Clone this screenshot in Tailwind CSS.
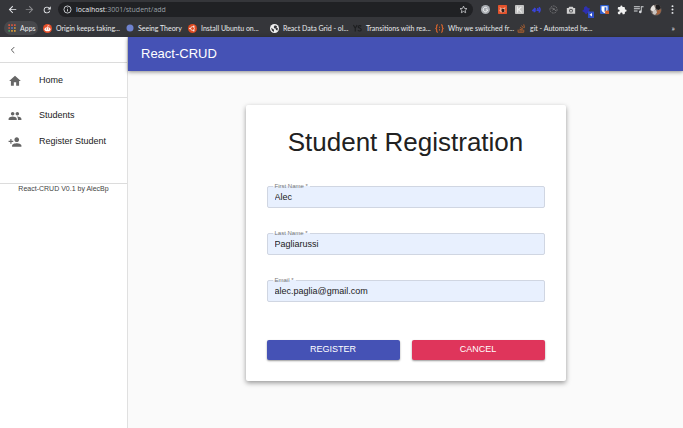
<!DOCTYPE html>
<html lang="en">
<head>
    <meta charset="UTF-8">
    <meta name="viewport" content="width=device-width, initial-scale=1.0">
    <title>React-CRUD</title>
    <script src="https://cdn.jsdelivr.net/npm/@tailwindcss/browser@4"></script>
</head>
<body class="min-h-screen flex flex-col bg-[#fafafa] font-['Liberation_Sans',Arial,sans-serif] text-[#212121]">

    <!-- Browser chrome -->
    <header class="bg-[#35363a] text-[#e8eaed] font-['Open_Sans',sans-serif] text-[7px]">
        <div class="flex items-center h-[19px] pl-1 pr-[2px]">
            <button class="w-[17px] flex justify-center" aria-label="Back">
                <svg class="w-[9px] h-[9px]" viewBox="0 0 24 24" fill="currentColor"><path d="M22 11H6.8l6.6-6.6L12 2 2 12l10 10 1.6-1.8L6.8 13.5H22z"/></svg>
            </button>
            <button class="w-[17px] flex justify-center text-[#8b8c8f]" aria-label="Forward">
                <svg class="w-[9px] h-[9px]" viewBox="0 0 24 24" fill="currentColor"><path d="M2 11h15.2l-6.6-6.6L12 2l10 10-10 10-1.6-1.8 6.8-6.7H2z"/></svg>
            </button>
            <button class="w-[17px] flex justify-center" aria-label="Reload">
                <svg class="w-[10px] h-[10px]" viewBox="0 0 24 24" fill="currentColor"><path d="M17.65 6.35A7.96 7.96 0 0 0 12 4a8 8 0 1 0 7.73 10h-2.08A6 6 0 1 1 12 6c1.66 0 3.14.69 4.22 1.78L13 11h8V3z"/></svg>
            </button>
            <div class="flex-1 flex items-center h-[15px] ml-[3px] mr-1 pl-[5px] pr-[5px] rounded-full bg-[#202124]">
                <svg class="w-[9px] h-[9px] mr-[4px]" viewBox="0 0 24 24" fill="none" stroke="#d5d7da" stroke-width="2.4"><circle cx="12" cy="12" r="9.5"/><path d="M12 11v6M12 6.5v2"/></svg>
                <p class="flex-1 pt-px text-[7px] text-[#9aa0a6]"><span class="text-[#e8eaed]">localhost</span>:3001/student/add</p>
                <svg class="w-[9px] h-[9px]" viewBox="0 0 24 24" fill="none" stroke="#d5d7da" stroke-width="2"><path d="M12 3l2.7 6.1 6.6.6-5 4.4 1.5 6.5L12 17.2l-5.8 3.4 1.5-6.5-5-4.4 6.6-.6z"/></svg>
            </div>
            <button class="w-[17px] flex justify-center" aria-label="Grammar checker">
                <svg class="w-[9px] h-[9px]" viewBox="0 0 24 24"><circle cx="12" cy="12" r="12" fill="#a9adb2"/><path d="M16.5 8.5a6 6 0 1 0 1.3 4.5H13" fill="none" stroke="#f4f5f6" stroke-width="2.6"/></svg>
            </button>
            <button class="w-[17px] flex justify-center" aria-label="Debugger">
                <svg class="w-[9px] h-[9px]" viewBox="0 0 24 24"><rect width="24" height="24" rx="2" fill="#e4532c"/><path d="M4 5l5 3h6l5-3-2 7 2 5-6 3-7-1-4-5 3-3z" fill="#f3a58c"/><path d="M10 9l7 2v7l-5 2-3-5z" fill="#2a2220"/></svg>
            </button>
            <button class="w-[17px] flex justify-center" aria-label="Formatter">
                <svg class="w-[9px] h-[9px]" viewBox="0 0 24 24"><rect width="24" height="24" rx="2" fill="#c3c3c3"/><path d="M7 4v16M7 14L17 5M10 11l8 9" stroke="#ededed" stroke-width="3" fill="none"/></svg>
            </button>
            <button class="w-[17px] flex justify-center" aria-label="Volume booster">
                <svg class="w-[9px] h-[9px]" viewBox="0 0 24 24" fill="none" stroke="#3a44d8" stroke-width="4"><path d="M1 16l5-5v8M8 8v10M12 14h5l-2-6M18 20c4-4 4-10 1-14"/></svg>
            </button>
            <button class="w-[17px] flex justify-center" aria-label="React tools">
                <svg class="w-[9px] h-[9px]" viewBox="0 0 24 24" fill="none" stroke="#77777a" stroke-width="2.4"><circle cx="12" cy="12" r="9.5" stroke-dasharray="5 2"/><path d="M6 8c5 0 10 3 12 8M9 14l6-4"/></svg>
            </button>
            <button class="w-[17px] flex justify-center" aria-label="Screenshot">
                <svg class="w-[10px] h-[10px]" viewBox="0 0 24 24" fill="#d0d0d0"><path d="M8 4h8l2 3h4v14H2V7h4z"/><circle cx="12" cy="13.5" r="4.6" fill="#4b4c50"/><circle cx="12" cy="13.5" r="2.4"/></svg>
            </button>
            <button class="w-[17px] flex justify-center" aria-label="Tab manager">
                <svg class="w-[12px] h-[12px] mt-1" viewBox="0 0 24 24"><path d="M8 0l4 4 4 1-2 4 2 4-5 1-3 3-3-4-5-3 4-3V3z" fill="#2e30b0"/><rect x="12" y="11" width="12" height="13" rx="1" fill="#3050c8"/><path d="M20 14v7l-5-3.5z" fill="#fff"/></svg>
            </button>
            <button class="w-[17px] flex justify-center" aria-label="Password manager">
                <svg class="w-[9px] h-[9px]" viewBox="0 0 24 24"><rect width="24" height="24" rx="3" fill="#2e5fd0"/><path d="M4 3h16v9c0 5-4 8-8 10-4-2-8-5-8-10z" fill="#fff"/><path d="M12 6h5v6c0 3-2 5-5 6z" fill="#2e5fd0"/><rect x="14" y="15" width="10" height="9" fill="#d2622a"/></svg>
            </button>
            <button class="w-[17px] flex justify-center" aria-label="Extensions">
                <svg class="w-[10px] h-[10px]" viewBox="0 0 24 24" fill="#f1f1f1"><path d="M20.5 11H19V7a2 2 0 0 0-2-2h-4V3.5a2.5 2.5 0 0 0-5 0V5H4a2 2 0 0 0-2 2v3.8h1.5a2.7 2.7 0 0 1 0 5.4H2V20a2 2 0 0 0 2 2h3.8v-1.5a2.7 2.7 0 0 1 5.4 0V22H17a2 2 0 0 0 2-2v-4h1.5a2.5 2.5 0 0 0 0-5z"/></svg>
            </button>
            <button class="w-[17px] flex justify-center" aria-label="Media controls">
                <svg class="w-[11px] h-[11px]" viewBox="0 0 24 24" fill="#d5d7da"><path d="M15 5H2v2.2h13zM15 9.5H2v2.2h13zM2 16.2h8V14H2zM17 5v9.2a3 3 0 1 0 2 2.8V7.200h4V5z"/></svg>
            </button>
            <button class="w-[17px] flex justify-center" aria-label="Profile">
                <svg class="w-[12px] h-[12px]" viewBox="0 0 24 24"><circle cx="12" cy="12" r="11" fill="#6c625d"/><path d="M1 12a11 11 0 0 1 7-10l3 8-4 6z" fill="#e6e2df"/><path d="M12 2h6l4 6-5 4-5-3z" fill="#1f1d1e"/><path d="M13 13l9-2-2 8-7 3z" fill="#a8633c"/><path d="M6 14l6-3 2 6-4 5-5-3z" fill="#c9c4c1"/></svg>
            </button>
            <button class="w-[17px] flex justify-center" aria-label="Menu">
                <svg class="w-[9px] h-[9px]" viewBox="0 0 24 24" fill="#e8eaed"><circle cx="12" cy="3" r="2.6"/><circle cx="12" cy="12" r="2.6"/><circle cx="12" cy="21" r="2.6"/></svg>
            </button>
        </div>

        <!-- Bookmarks -->
        <nav class="flex items-center h-[18px] pl-1 pr-2 whitespace-nowrap font-[Lato,sans-serif]">
            <a href="#" class="flex items-center gap-1 h-[14px] w-[34px] mr-[5px] pl-[4px] rounded-full bg-[#47484c]">
                <svg class="w-[8px] h-[8px] shrink-0" viewBox="0 0 24 24"><path d="M1 1h5v5H1zM9.500 1h5v5h-5z" fill="#d9573f"/><path d="M18 1h5v5h-5zM1 9.500h5v5H1z" fill="#d9573f"/><path d="M9.500 9.500h5v5h-5z" fill="#5b7fd0"/><path d="M18 9.500h5v5h-5zM9.500 18h5v5h-5zM18 18h5v5h-5z" fill="#d99a3a"/><path d="M1 18h5v5H1z" fill="#4f9d5d"/></svg>
                Apps
            </a>
            <a href="#" class="flex items-center gap-1 w-[83px]">
                <svg class="w-[9px] h-[9px] shrink-0" viewBox="0 0 24 24"><circle cx="12" cy="12" r="12" fill="#e8502a"/><ellipse cx="12" cy="14" rx="8" ry="5.5" fill="#fff"/><circle cx="9" cy="13" r="1.5" fill="#e8502a"/><circle cx="15" cy="13" r="1.5" fill="#e8502a"/><path d="M12 9l1-5 4 1" stroke="#fff" stroke-width="1.5" fill="none"/></svg>
                Origin keeps taking...
            </a>
            <a href="#" class="flex items-center gap-1 w-[62px]">
                <svg class="w-[8px] h-[8px] shrink-0" viewBox="0 0 24 24"><circle cx="12" cy="12" r="10.5" fill="#6f82cf"/></svg>
                Seeing Theory
            </a>
            <a href="#" class="flex items-center gap-1 w-[82px]">
                <svg class="w-[9px] h-[9px] shrink-0" viewBox="0 0 24 24"><circle cx="12" cy="12" r="12" fill="#de4a20"/><circle cx="12" cy="12" r="5" fill="none" stroke="#fff" stroke-width="2"/><circle cx="5" cy="12" r="2" fill="#fff"/><circle cx="15.5" cy="6" r="2" fill="#fff"/><circle cx="15.5" cy="18" r="2" fill="#fff"/></svg>
                Install Ubuntu on...
            </a>
            <a href="#" class="flex items-center gap-1 w-[83px]">
                <svg class="w-[9px] h-[9px] shrink-0" viewBox="0 0 24 24"><circle cx="12" cy="12" r="12" fill="#f1f1f1"/><path d="M13 3l6 3-2 3 4 2-1 6-4-1-1-4-4-1-1-4zM3 10l5 3 3 2-1 6-5-4z" fill="#35363a"/></svg>
                React Data Grid - ol...
            </a>
            <a href="#" class="flex items-center gap-1 w-[82px]">
                <svg class="w-[9px] h-[9px] shrink-0" viewBox="0 0 24 24" fill="none" stroke="#1d1e20" stroke-width="3"><path d="M1 3l5 8v9M11 3l-5 8M22 6c-4-3-9-1-8 2s8 3 8 7-6 5-9 2"/></svg>
                Transitions with rea...
            </a>
            <a href="#" class="flex items-center gap-1 w-[82px]">
                <svg class="w-[9px] h-[9px] shrink-0" viewBox="0 0 24 24" fill="none" stroke="#e2672c" stroke-width="2.8"><path d="M8 2C3 2 5 6 4.500 9S1 12 1 12s3 0 3.500 3S3 22 8 22M16 2c5 0 3 4 3.500 7s3.500 3 3.500 3-3 0-3.500 3 1.500 7-3.500 7M12 7v3M12 14v3"/></svg>
                Why we switched fr...
            </a>
            <a href="#" class="flex items-center gap-1 w-[82px]">
                <svg class="w-[9px] h-[9px] shrink-0" viewBox="0 0 24 24" fill="none" stroke="#b5632f" stroke-width="2.4"><path d="M3 15v7h15v-7M6 18.500h9M6.500 14l9 2M8 9l8 4.500M12 4l6 7M18 1l2 9"/></svg>
                git - Automated he...
            </a>
            <button class="ml-auto text-[8px]" aria-label="More bookmarks">»</button>
        </nav>
    </header>

    <div class="flex-1 flex">
        <!-- Drawer -->
        <aside class="w-32 shrink-0 bg-white border-r border-[#e0e0e0] text-[9px]">
            <div class="h-[26px] flex items-center pl-[8px] border-b border-[#dcdcdc]">
                <button aria-label="Close menu">
                    <svg class="w-[10px] h-[10px]" viewBox="0 0 24 24" fill="none" stroke="#555" stroke-width="2.4"><path d="M15 5l-7 7 7 7"/></svg>
                </button>
            </div>
            <nav class="border-b border-[#dcdcdc] h-[121px]">
                <div class="pt-[5px] pb-[3px] border-b border-[#e0e0e0]">
                    <a href="#" class="flex items-center h-[26px] pl-2">
                        <svg class="w-[14px] h-[14px] mr-[17px]" viewBox="0 0 24 24" fill="#666"><path d="M10 20v-6h4v6h5v-8h3L12 3 2 12h3v8z"/></svg>
                        Home
                    </a>
                </div>
                <div class="pt-[5px] pb-[3px]">
                    <a href="#" class="flex items-center h-[26px] pl-2">
                        <svg class="w-[14px] h-[14px] mr-[17px]" viewBox="0 0 24 24" fill="#666"><path d="M16 11c1.660 0 2.990-1.340 2.990-3S17.660 5 16 5s-3 1.340-3 3 1.340 3 3 3zm-8 0c1.660 0 2.990-1.340 2.990-3S9.660 5 8 5 5 6.340 5 8s1.340 3 3 3zm0 2c-2.330 0-7 1.170-7 3.500V19h14v-2.500c0-2.330-4.670-3.500-7-3.500zm8 0c-.290 0-.620.020-.970.050 1.160.840 1.970 1.970 1.970 3.450V19h6v-2.500c0-2.330-4.670-3.500-7-3.500z"/></svg>
                        Students
                    </a>
                    <a href="#" class="flex items-center h-[26px] pl-2">
                        <svg class="w-[14px] h-[14px] mr-[17px]" viewBox="0 0 24 24" fill="#666"><path d="M15 12c2.210 0 4-1.790 4-4s-1.790-4-4-4-4 1.790-4 4 1.790 4 4 4zm-9-2V7H4v3H1v2h3v3h2v-3h3v-2H6zm9 4c-2.670 0-8 1.340-8 4v2h16v-2c0-2.660-5.330-4-8-4z"/></svg>
                        Register Student
                    </a>
                </div>
            </nav>
            <p class="text-[7px] leading-[10px] text-center text-[#444]">React-CRUD V0.1 by AlecBp</p>
        </aside>

        <main class="flex-1 min-w-0">
            <div class="h-[34px] flex items-center px-[13px] bg-[#4552b5] text-white shadow-[0_1px_4px_rgba(0,0,0,0.45)]">
                <h2 class="text-[13px]">React-CRUD</h2>
            </div>

            <form class="w-80 mx-auto mt-[34px] mb-8 px-[21px] pt-5 pb-[21px] bg-white rounded-xs shadow-[0_2px_5px_rgba(0,0,0,0.4)]">
                <h1 class="text-[26px] leading-[34px] text-center">Student Registration</h1>
                <div class="mt-[27px] flex flex-col gap-[25px] text-[9px]">
                    <div class="relative">
                        <label for="firstName" class="absolute left-[6px] -top-[4px] px-[2px] text-[6px] leading-[8px] text-[#777] bg-linear-to-b from-white from-50% to-[#e8f0fe] to-50%">First Name *</label>
                        <input id="firstName" type="text" value="Alec" required class="block w-full h-[22px] px-[7px] rounded-xs border border-[#d0d6e2] bg-[#e8f0fe]">
                    </div>
                    <div class="relative">
                        <label for="lastName" class="absolute left-[6px] -top-[4px] px-[2px] text-[6px] leading-[8px] text-[#777] bg-linear-to-b from-white from-50% to-[#e8f0fe] to-50%">Last Name *</label>
                        <input id="lastName" type="text" value="Pagliarussi" required class="block w-full h-[22px] px-[7px] rounded-xs border border-[#d0d6e2] bg-[#e8f0fe]">
                    </div>
                    <div class="relative">
                        <label for="email" class="absolute left-[6px] -top-[4px] px-[2px] text-[6px] leading-[8px] text-[#777] bg-linear-to-b from-white from-50% to-[#e8f0fe] to-50%">Email *</label>
                        <input id="email" type="email" value="alec.paglia@gmail.com" required class="block w-full h-[22px] px-[7px] rounded-xs border border-[#d0d6e2] bg-[#e8f0fe]">
                    </div>
                </div>
                <div class="mt-[38px] grid grid-cols-2 gap-3 text-[9px] text-white">
                    <button type="submit" class="h-5 rounded-xs bg-[#4552b5] shadow-[0_1px_2px_rgba(0,0,0,0.4)]">REGISTER</button>
                    <button type="button" class="h-5 rounded-xs bg-[#df355b] shadow-[0_1px_2px_rgba(0,0,0,0.4)]">CANCEL</button>
                </div>
            </form>
        </main>
    </div>
</body>
</html>
